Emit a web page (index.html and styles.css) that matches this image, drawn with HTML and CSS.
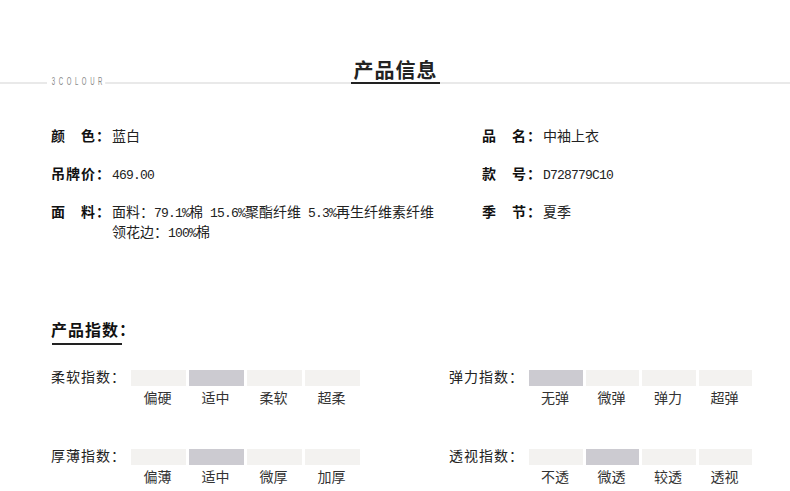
FILE: index.html
```html
<!DOCTYPE html>
<html lang="zh">
<head>
<meta charset="utf-8">
<title>产品信息</title>
<link rel="stylesheet" href="styles.css">
</head>
<body>
<div class="page">
  <header class="head">
    <span class="brand">3COLOUR</span>
    <h1 class="head-title">产品信息</h1>
  </header>
  <section class="info">
    <div class="info-col">
      <div class="row"><span class="key">颜<i class="gap"></i>色：</span><span class="val">蓝白</span></div>
      <div class="row"><span class="key">吊牌价：</span><span class="val"><span class="num">469.00</span></span></div>
      <div class="row"><span class="key">面<i class="gap"></i>料：</span><span class="val">面料<span class="colon">：</span><span class="num">79.1%</span>棉<span class="num"> 15.6%</span>聚酯纤维<span class="num"> 5.3%</span>再生纤维素纤维<br>领花边<span class="colon">：</span><span class="num">100%</span>棉</span></div>
    </div>
    <div class="info-col">
      <div class="row"><span class="key">品<i class="gap"></i>名：</span><span class="val">中袖上衣</span></div>
      <div class="row"><span class="key">款<i class="gap"></i>号：</span><span class="val"><span class="num">D728779C10</span></span></div>
      <div class="row"><span class="key">季<i class="gap"></i>节：</span><span class="val">夏季</span></div>
    </div>
  </section>
  <h2 class="sub-title">产品指数：</h2>
  <section class="meters">
    <div class="meter">
      <span class="meter-name">柔软指数：</span>
      <div class="scale">
        <div class="step"><span class="bar"></span><span class="cap">偏硬</span></div>
        <div class="step"><span class="bar on"></span><span class="cap">适中</span></div>
        <div class="step"><span class="bar"></span><span class="cap">柔软</span></div>
        <div class="step"><span class="bar"></span><span class="cap">超柔</span></div>
      </div>
    </div>
    <div class="meter right">
      <span class="meter-name">弹力指数：</span>
      <div class="scale">
        <div class="step"><span class="bar on"></span><span class="cap">无弹</span></div>
        <div class="step"><span class="bar"></span><span class="cap">微弹</span></div>
        <div class="step"><span class="bar"></span><span class="cap">弹力</span></div>
        <div class="step"><span class="bar"></span><span class="cap">超弹</span></div>
      </div>
    </div>
    <div class="meter">
      <span class="meter-name">厚薄指数：</span>
      <div class="scale">
        <div class="step"><span class="bar"></span><span class="cap">偏薄</span></div>
        <div class="step"><span class="bar on"></span><span class="cap">适中</span></div>
        <div class="step"><span class="bar"></span><span class="cap">微厚</span></div>
        <div class="step"><span class="bar"></span><span class="cap">加厚</span></div>
      </div>
    </div>
    <div class="meter right">
      <span class="meter-name">透视指数：</span>
      <div class="scale">
        <div class="step"><span class="bar"></span><span class="cap">不透</span></div>
        <div class="step"><span class="bar on"></span><span class="cap">微透</span></div>
        <div class="step"><span class="bar"></span><span class="cap">较透</span></div>
        <div class="step"><span class="bar"></span><span class="cap">透视</span></div>
      </div>
    </div>
  </section>
</div>
</body>
</html>
```
FILE: styles.css
```css
html, body {
  margin: 0;
  padding: 0;
  background: #fff;
}
body {
  width: 790px;
  height: 491px;
  overflow: hidden;
  font-family: "Noto Sans CJK SC", "Liberation Sans", sans-serif;
  color: #222;
}
.page {
  width: 790px;
}
.head {
  position: relative;
  height: 82px;
  border-bottom: 2px solid #e9e9e9;
  display: flex;
  justify-content: center;
  align-items: flex-end;
}
.head-title {
  margin: 0 0 -2px 1px;
  width: 89px;
  height: 30px;
  border-bottom: 2px solid #222;
  font-size: 20px;
  line-height: 35px;
  font-weight: 700;
  letter-spacing: 1px;
  text-align: center;
  color: #222;
}
.brand {
  position: absolute;
  left: 47px;
  top: 76px;
  box-sizing: border-box;
  width: 97px;
  padding-left: 8px;
  background: #fff;
  font-family: "Liberation Sans", sans-serif;
  font-size: 10px;
  line-height: 12px;
  letter-spacing: 6px;
  white-space: nowrap;
  overflow: hidden;
  color: #888;
  font-weight: 400;
  transform: scale(0.6, 1.15);
  transform-origin: left center;
}
.info {
  display: grid;
  grid-template-columns: 431px 1fr;
  padding: 39px 0 0 51px;
  height: 191px;
}
.row {
  display: flex;
  min-height: 38px;
}
.key {
  flex: none;
  width: 61px;
  display: block;
  font-size: 14px;
  line-height: 24px;
  font-weight: 700;
  letter-spacing: 1px;
  color: #111;
}
.gap {
  display: inline-block;
  width: 15px;
}
.val {
  font-size: 14px;
  line-height: 20px;
  padding-top: 2px;
  color: #222;
  white-space: pre;
}
.colon {
  font-family: "Noto Sans CJK TC", sans-serif;
}
.num {
  font-family: "Liberation Mono", monospace;
  font-size: 13px;
  line-height: 1;
  letter-spacing: -0.8px;
}
.sub-title {
  margin: 0 0 0 52px;
  width: 70px;
  height: 29px;
  border-bottom: 2px solid #222;
  font-size: 16px;
  line-height: 30px;
  font-weight: 700;
  letter-spacing: 1px;
  text-indent: -1px;
  white-space: nowrap;
  color: #111;
}
.meters {
  display: grid;
  grid-template-columns: 398px 303px;
  row-gap: 31px;
  padding: 25px 0 0 51px;
}
.meter {
  display: flex;
  height: 48px;
}
.meter-name {
  flex: none;
  width: 80px;
  font-size: 14px;
  line-height: 12px;
  letter-spacing: 1px;
  white-space: nowrap;
  color: #222;
}
.scale {
  display: grid;
  grid-template-columns: repeat(4, 55px);
  column-gap: 3px;
}
.right .scale {
  grid-template-columns: 54px 53px 54px 53px;
}
.step {
  display: flex;
  flex-direction: column;
  align-items: center;
}
.bar {
  display: block;
  width: 100%;
  height: 16px;
  background: #f3f2f0;
}
.bar.on {
  background: #cccbd1;
}
.cap {
  margin-right: 2px;
  font-size: 14px;
  line-height: 22px;
  color: #333;
}
```
